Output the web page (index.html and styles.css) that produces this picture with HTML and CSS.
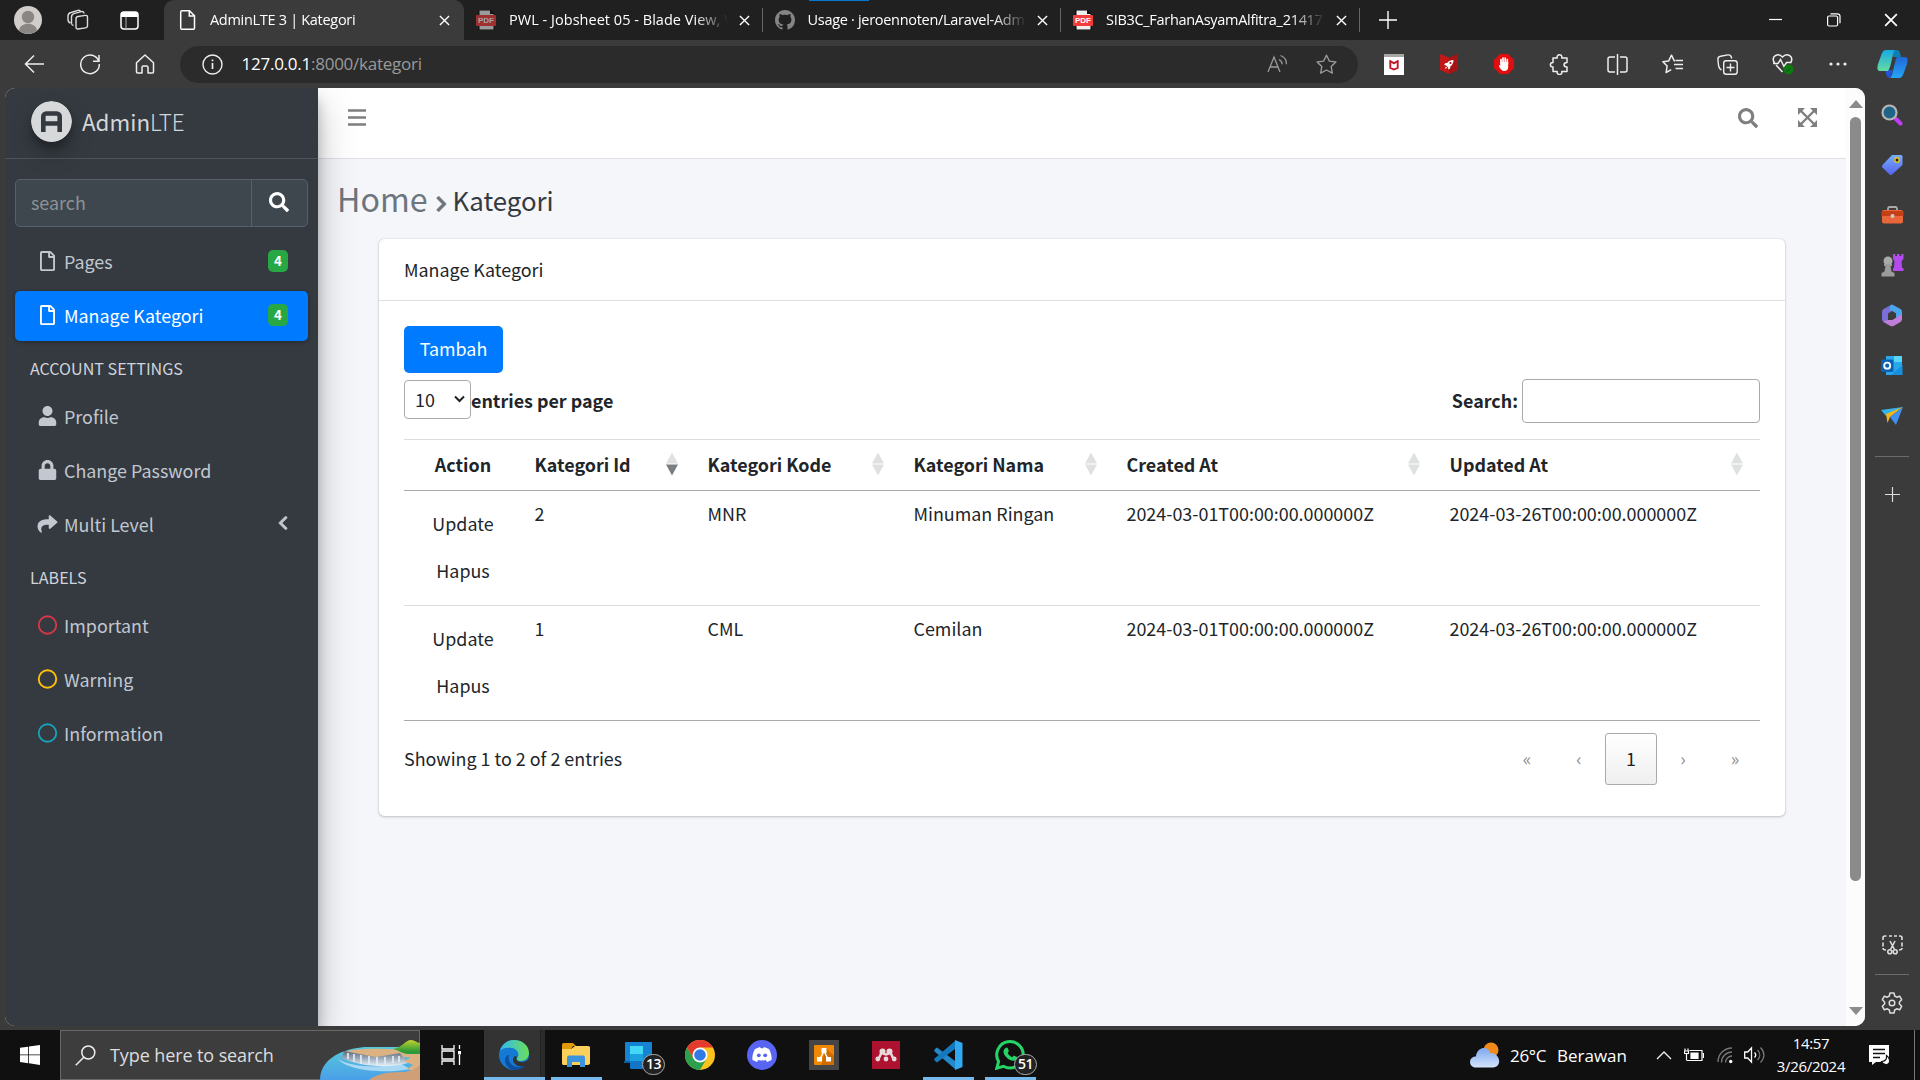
FILE: index.html
```html
<!DOCTYPE html>
<html lang="en">
<head>
<meta charset="utf-8">
<title>AdminLTE 3 | Kategori</title>
<link rel="stylesheet" href="styles.css">
</head>
<body>
<svg class="defs" width="0" height="0">
  <symbol id="x" viewBox="0 0 12 12"><path d="M1 1l10 10M11 1L1 11" fill="none" stroke="currentColor" stroke-width="1.5"/></symbol>
  <symbol id="plus" viewBox="0 0 18 18"><path d="M9 0v18M0 9h18" fill="none" stroke="currentColor" stroke-width="1.4"/></symbol>
  <symbol id="search" viewBox="0 0 512 512"><path fill="currentColor" d="M505 442.700L405.300 343c-4.500-4.500-10.600-7-17-7H372c27.600-35.300 44-79.700 44-128C416 93.100 322.900 0 208 0S0 93.100 0 208s93.100 208 208 208c48.300 0 92.700-16.400 128-44v16.300c0 6.400 2.500 12.500 7 17l99.700 99.700c9.400 9.400 24.600 9.400 33.900 0l28.300-28.300c9.400-9.400 9.400-24.600.1-34zM208 336c-70.700 0-128-57.200-128-128 0-70.700 57.200-128 128-128 70.700 0 128 57.200 128 128 0 70.700-57.200 128-128 128z"/></symbol>
  <symbol id="file" viewBox="0 0 384 512"><path fill="currentColor" d="M369.900 97.900L286 14C277 5 264.800-.1 252.100-.1H48C21.500 0 0 21.500 0 48v416c0 26.500 21.500 48 48 48h288c26.500 0 48-21.500 48-48V131.900c0-12.700-5.100-25-14.100-34zM332.100 128H256V51.900l76.100 76.100zM48 464V48h160v104c0 13.300 10.700 24 24 24h104v288H48z"/></symbol>
  <symbol id="circle" viewBox="0 0 512 512"><circle cx="256" cy="256" r="224" fill="none" stroke="currentColor" stroke-width="48"/></symbol>
  <symbol id="left" viewBox="0 0 320 512"><path fill="currentColor" d="M34.500 239L228.900 44.700c9.400-9.400 24.600-9.400 33.900 0l22.700 22.700c9.400 9.400 9.400 24.500 0 33.900L131.500 256l154 154.700c9.300 9.400 9.300 24.500 0 33.900l-22.700 22.700c-9.400 9.400-24.600 9.400-33.900 0L34.500 273c-9.300-9.400-9.300-24.600 0-34z"/></symbol>
  <symbol id="sort" viewBox="0 0 12 24"><path d="M6 .5l6 11H0z" fill="#dfe1e1"/><path d="M0 12.500h12l-6 11z" fill="currentColor"/></symbol>
</svg>

<header class="tabs">
  <div class="slot w56"><svg width="28" height="28" viewBox="0 0 28 28"><circle cx="14" cy="14" r="14" fill="#d0cdca"/><circle cx="14" cy="11" r="6.200" fill="#898683"/><path d="M5 24.500c1-9 17-9 18 0a14 14 0 0 1-18 0z" fill="#898683"/></svg></div>
  <div class="slot w43"><svg width="22" height="22" viewBox="0 0 22 22" fill="none" stroke="#ddd" stroke-width="1.400"><rect x="9" y="6.500" width="11.500" height="12.500" rx="2" transform="skewY(-8) translate(0 2.500)"/><path d="M6.500 16.500c-2-.5-2-1-2-3V8c0-2 1-3 3-3.600l7-1.800c1.500-.3 2.500.3 2.500 2M3.500 14C1.500 13.500 1 12.500 1 10.500V7c0-2 1-3 3-3.500L11 1.300c1-.3 2 0 2.500 1"/></svg></div>
  <div class="slot w62"><svg width="20" height="19" viewBox="0 0 20 19"><rect x="1" y="1" width="17" height="17" rx="3" fill="none" stroke="#fff" stroke-width="1.500"/><path d="M1 6V3a2 2 0 0 1 2-2h13a2 2 0 0 1 2 2v3z" fill="#fff"/><path d="M6 6v12" stroke="#aaa"/></svg></div>
  <div class="tab active"><svg class="fav" width="20" height="20" viewBox="0 0 20 20" fill="none" stroke="#fff" stroke-width="1.500"><path d="M4 .8h7.500l5 5V18a1.300 1.300 0 0 1-1.300 1.300H4A1.300 1.300 0 0 1 2.700 18V2A1.300 1.300 0 0 1 4 .8zM11.300 1v5h5"/></svg><span class="title">AdminLTE 3 | Kategori</span><svg class="close" width="11" height="11"><use href="#x"/></svg></div>
  <div class="tab"><svg class="fav dim" width="20" height="20" viewBox="0 0 20 20"><path d="M3 0h11l4 4v16H3z" fill="#eee" stroke="#000"/><path d="M14 0v4h4" fill="#111"/><rect y="5" width="20" height="11" rx="1" fill="#f23b3b"/><text x="10" y="13.300" text-anchor="middle" class="pdf-label">PDF</text></svg><span class="title t2">PWL - Jobsheet 05 - Blade View, W</span><svg class="close" width="11" height="11"><use href="#x"/></svg></div>
  <div class="tab"><svg class="fav" width="20" height="20" viewBox="0 0 16 16"><path fill="#858585" d="M8 0C3.580 0 0 3.580 0 8c0 3.540 2.290 6.530 5.470 7.590.4.070.55-.17.55-.38 0-.19-.01-.82-.01-1.490-2.010.37-2.530-.49-2.690-.94-.09-.23-.48-.94-.82-1.130-.28-.15-.68-.52-.01-.53.63-.01 1.080.58 1.230.82.72 1.210 1.870.87 2.330.66.070-.52.28-.87.51-1.070-1.780-.2-3.640-.89-3.640-3.950 0-.87.31-1.590.82-2.150-.08-.2-.36-1.020.08-2.120 0 0 .67-.21 2.200.82.640-.18 1.320-.27 2-.27s1.360.09 2 .27c1.530-1.040 2.200-.82 2.200-.82.440 1.100.16 1.920.08 2.120.51.560.82 1.270.82 2.150 0 3.070-1.870 3.750-3.650 3.950.29.25.54.73.54 1.480 0 1.070-.01 1.930-.01 2.200 0 .21.150.46.55.38A8 8 0 0 0 16 8c0-4.420-3.580-8-8-8z"/></svg><span class="title t3">Usage · jeroennoten/Laravel-Adm</span><svg class="close" width="11" height="11"><use href="#x"/></svg></div>
  <div class="tab"><svg class="fav" width="20" height="20" viewBox="0 0 20 20"><path d="M3 0h11l4 4v16H3z" fill="#eee" stroke="#000"/><path d="M14 0v4h4" fill="#111"/><rect y="5" width="20" height="11" rx="1" fill="#f23b3b"/><text x="10" y="13.300" text-anchor="middle" class="pdf-label">PDF</text></svg><span class="title t4">SIB3C_FarhanAsyamAlfitra_21417</span><svg class="close" width="11" height="11"><use href="#x"/></svg></div>
  <div class="slot w56"><svg width="18" height="18"><use href="#plus"/></svg></div>
  <div class="window-buttons">
    <div class="slot"><svg width="14" height="14" viewBox="0 0 14 14"><path d="M0 6.500h13" stroke="#fff" stroke-width="1.200"/></svg></div>
    <div class="slot"><svg width="14" height="14" viewBox="0 0 14 14" fill="none" stroke="#fff" stroke-width="1.200"><rect x=".6" y="3" width="10" height="10" rx="1.500"/><path d="M3.500.8h7A2.500 2.500 0 0 1 13 3.300v7"/></svg></div>
    <div class="slot"><svg width="14" height="14"><use href="#x"/></svg></div>
  </div>
  <i class="loading"></i>
</header>

<nav class="toolbar">
  <div class="slot w55"><svg width="21" height="20" viewBox="0 0 21 20" fill="none" stroke="#eee" stroke-width="1.500"><path d="M20 10H1.500M10 1.500L1.500 10l8.500 8.500"/></svg></div>
  <div class="slot w55"><svg width="22" height="22" viewBox="0 0 22 22" fill="none" stroke="#eee" stroke-width="1.500"><path d="M19.800 8.300A9.300 9.300 0 1 0 20.300 11M20 2v6.300h-6"/></svg></div>
  <div class="slot w55"><svg width="20" height="20" viewBox="0 0 20 20" fill="none" stroke="#eee" stroke-width="1.500" stroke-linejoin="round"><path d="M1.500 8.800L10 1l8.500 7.800V18a1 1 0 0 1-1 1H13v-5.500a1.500 1.500 0 0 0-1.500-1.500h-3A1.500 1.500 0 0 0 7 13.500V19H2.500a1 1 0 0 1-1-1z"/></svg></div>
  <div class="address">
    <svg width="21" height="21" viewBox="0 0 21 21" fill="none" stroke="#eee" stroke-width="1.400"><circle cx="10.500" cy="10.500" r="9.500"/><path d="M10.500 9v6M10.500 5.500v1.800" stroke-width="1.700"/></svg>
    <span class="url">127.0.0.1<em>:8000/kategori</em></span>
    <svg class="read" width="21" height="20" viewBox="0 0 21 20" fill="none" stroke="#999" stroke-width="1.300"><path d="M1 18L7 3l6 15M3.200 13h7.600M12 5.500c2 1 3 2.500 3.200 4.700M13.500 1.500c4 1.500 6 4.500 6 8.700"/></svg>
    <svg width="21" height="20" viewBox="0 0 21 20" fill="none" stroke="#999" stroke-width="1.400" stroke-linejoin="round"><path d="M10.500 1.200l2.900 5.900 6.500.9-4.700 4.600 1.100 6.500-5.800-3.100-5.800 3.100 1.100-6.500L1.100 8l6.500-.9z"/></svg>
  </div>
  <div class="tools">
    <div class="slot w55"><svg width="20" height="21" viewBox="0 0 20 21"><path fill="#fff" d="M0 0h20v21H0z"/><path fill="#a9a6a2" d="M0 0h20v3H0z"/><path d="M6.300 6.500v7.300L10 15.500l3.700-1.700V6.500M5.500 6.500L10 9.300l4.500-2.800" fill="none" stroke="#c01827" stroke-width="1.900"/></svg></div>
    <div class="slot w55"><svg width="18" height="20" viewBox="0 0 18 20"><path fill="#c01818" d="M0 0l9 3.500L18 0v16l-9 4-9-4z"/><path fill="#8e0f0f" d="M9 3.500L18 0v16l-9 4z" opacity=".5"/><path fill="#fff" d="M13.500 6c-3 0-5 1.200-6.300 3L5 9.300l-.8 1.800 2 .3 1.800 1.900.3 2.200 1.800-1 .3-2.200c2-1.300 3.100-3.300 3.100-6.300zM6 12.500L4.800 15l2.400-1.200z"/><circle cx="10.500" cy="9" r="1.100" fill="#a31414"/></svg></div>
    <div class="slot w55"><svg width="20" height="20" viewBox="0 0 20 20"><path fill="#e40d0d" d="M6 0h8l6 6v8l-6 6H6l-6-6V6z"/><path d="M7 9V5.500M9 9V4M11.200 9V4M13.300 10V5.500" stroke="#fff" stroke-width="1.700" stroke-linecap="round"/><path fill="#fff" d="M6.200 8h8v5c0 2.500-1.500 4-4 4s-3.500-1.500-5-4.200c-.8-1.500.5-1.800 1-1z"/></svg></div>
    <div class="slot w55"><svg width="20" height="21" viewBox="0 0 20 21" fill="none" stroke="#eee" stroke-width="1.500" stroke-linejoin="round"><path d="M4 4h4.200c-1-4.300 5.600-4.300 4.600 0H18v4.500c-4 .2-4 4.300 0 4.500V17.500h-5.200c1 4-5.600 4-4.600 0H4V13c-3.500 0-3.500-4.500 0-4.500z"/></svg></div>
    <i class="sep"></i>
    <div class="slot w55"><svg width="21" height="21" viewBox="0 0 21 21" fill="none" stroke="#eee" stroke-width="1.500"><path d="M10.500 0v21M8 3H3a2 2 0 0 0-2 2v11a2 2 0 0 0 2 2h5M13 3h5a2 2 0 0 1 2 2v11a2 2 0 0 1-2 2h-5"/></svg></div>
    <div class="slot w55"><svg width="21" height="20" viewBox="0 0 21 20" fill="none" stroke="#eee" stroke-width="1.500" stroke-linejoin="round"><path d="M13 7l-.7-.2L9.500 1.200 6.700 6.900.9 7.800l4.200 4.300-1 6.400 5.100-2.800M13.500 6.500H21M12 10.500h9M13.500 14.500H21"/></svg></div>
    <div class="slot w55"><svg width="21" height="21" viewBox="0 0 21 21" fill="none" stroke="#eee" stroke-width="1.400"><rect x="6.700" y="6.700" width="13.500" height="13.500" rx="2.500"/><path d="M13.500 9.500v8M9.500 13.500h8M4.500 16C2.500 15 2 14 1.600 12L.9 5.500C.8 3.500 1.500 2.500 3.500 2.200L11 .9c2-.2 3 .6 3.500 2.600l.2 1"/></svg></div>
    <div class="slot w55"><svg width="22" height="22" viewBox="0 0 22 22" fill="none" stroke="#eee" stroke-width="1.500"><path d="M2.500 10C-1.500 3.500 6-1 10.500 4 15-1 22.500 3.500 18.500 10M4 12l6.500 7M1 10.500h5l2.500-4 3.500 7 2.500-4h5"/><circle cx="16.500" cy="16.500" r="5" fill="#0e7a0e" stroke="none"/><path d="M14 17l1.700 1.500 3-3.500" stroke="#052" stroke-width="1"/></svg></div>
    <div class="slot w55"><svg width="18" height="4" viewBox="0 0 18 4" fill="#eee"><circle cx="2" cy="2" r="1.600"/><circle cx="9" cy="2" r="1.600"/><circle cx="16" cy="2" r="1.600"/></svg></div>
  </div>
  <div class="slot w55"><svg width="31" height="28" viewBox="0 0 31 28"><defs><linearGradient id="cp1" x2="0" y2="1"><stop stop-color="#19a9e5"/><stop offset="1" stop-color="#63dca0"/></linearGradient><linearGradient id="cp2" x2="0" y2="1"><stop stop-color="#2168d8"/><stop offset="1" stop-color="#25a6f5"/></linearGradient></defs><path fill="#0d7fb5" d="M14 0h6c3 0 3 3 4 7h-8z"/><path fill="#2354d8" d="M8 20h8l-3 8c-3 0-4-3-5-8z"/><path fill="url(#cp1)" d="M9 0h9c-3 2-3 16-7 21H3c-3 0-3-3-2-7L5 3c1-2 2-3 4-3z"/><path fill="url(#cp2)" d="M20 7h8c3 0 3 3 2 7l-4 11c-1 2-2 3-4 3h-9c3-1 4-16 7-21z"/></svg></div>
</nav>

<main class="stage">
  <div class="page">
    <aside class="sidebar">
      <div class="brand">
        <svg class="logo" width="41" height="41" viewBox="0 0 41 41"><circle cx="20.500" cy="20.500" r="20.500" fill="#d7d8da"/><path d="M12.300 31V15.500a3 3 0 0 1 3-3h10.400a3 3 0 0 1 3 3V31M12.300 22.500h16.400" fill="none" stroke="#353a40" stroke-width="4.600"/></svg>
        <span>Admin<b>LTE</b></span>
      </div>
      <div class="side-search"><span>search</span><div><svg width="20" height="20"><use href="#search"/></svg></div></div>
      <ul class="menu">
        <li><svg width="15" height="20"><use href="#file"/></svg><span>Pages</span><b class="badge">4</b></li>
        <li class="active"><svg width="15" height="20"><use href="#file"/></svg><span>Manage Kategori</span><b class="badge">4</b></li>
        <li class="head">ACCOUNT SETTINGS</li>
        <li><svg width="18" height="20" viewBox="0 0 448 512"><path fill="currentColor" d="M224 256c70.700 0 128-57.300 128-128S294.700 0 224 0 96 57.300 96 128s57.300 128 128 128zm89.600 32h-16.700c-22.200 10.200-46.900 16-72.900 16s-50.600-5.800-72.900-16h-16.700C60.200 288 0 348.200 0 422.400V464c0 26.500 21.500 48 48 48h352c26.500 0 48-21.500 48-48v-41.600c0-74.200-60.200-134.400-134.400-134.400z"/></svg><span>Profile</span></li>
        <li><svg width="18" height="20" viewBox="0 0 448 512"><path fill="currentColor" d="M400 224h-24v-72C376 68.200 307.800 0 224 0S72 68.200 72 152v72H48c-26.500 0-48 21.500-48 48v192c0 26.500 21.500 48 48 48h352c26.500 0 48-21.500 48-48V272c0-26.500-21.500-48-48-48zm-104 0H152v-72c0-39.700 32.300-72 72-72s72 32.300 72 72v72z"/></svg><span>Change Password</span></li>
        <li><svg width="20" height="20" viewBox="0 0 512 512"><path fill="currentColor" d="M503.700 189.800L327.700 37.900C312.300 24.500 288 35.300 288 56v80.100C127.400 137.900 0 170.100 0 322.300c0 61.400 39.600 122.300 83.300 154.100 13.700 9.900 33.100-2.500 28.100-18.600C66.100 312.800 132.900 274.300 288 272.100V360c0 20.700 24.300 31.500 39.700 18.200l176-152c11.100-9.600 11.100-26.800 0-36.400z"/></svg><span>Multi Level</span><svg class="caret" viewBox="2 32 316 448"><path fill="currentColor" stroke="currentColor" stroke-width="18" d="M34.500 239L228.900 44.700c9.400-9.400 24.600-9.400 33.900 0l22.700 22.700c9.400 9.400 9.400 24.500 0 33.900L131.500 256l154 154.700c9.300 9.400 9.300 24.500 0 33.900l-22.700 22.700c-9.400 9.400-24.600 9.400-33.900 0L34.500 273c-9.300-9.400-9.300-24.600 0-34z"/></svg></li>
        <li class="head">LABELS</li>
        <li><svg class="red" width="20" height="20"><use href="#circle"/></svg><span>Important</span></li>
        <li><svg class="yellow" width="20" height="20"><use href="#circle"/></svg><span>Warning</span></li>
        <li><svg class="cyan" width="20" height="20"><use href="#circle"/></svg><span>Information</span></li>
      </ul>
    </aside>
    <section class="content">
      <div class="navbar">
        <svg width="18" height="18" viewBox="0 0 18 18"><path d="M0 2.500h18M0 9.500h18M0 16.500h18" stroke="currentColor" stroke-width="2.600"/></svg>
        <svg class="nav-search" width="20" height="20"><use href="#search"/></svg>
        <svg width="19" height="19" viewBox="0 0 19 19"><path d="M3 3l13 13M16 3L3 16" stroke="currentColor" stroke-width="2.400"/><path fill="currentColor" d="M0 0h7L0 7zM19 0v7l-7-7zM0 19v-7l7 7zM19 19h-7l7-7z"/></svg>
      </div>
      <h1 class="crumbs"><span>Home</span><svg width="11" height="18" viewBox="0 0 320 512"><path fill="currentColor" stroke="currentColor" stroke-width="24" d="M285.500 273L91.100 467.300c-9.400 9.400-24.600 9.400-33.900 0l-22.700-22.700c-9.400-9.400-9.400-24.500 0-33.900L188.500 256l-154-154.700c-9.300-9.400-9.300-24.500 0-33.900l22.700-22.700c9.400-9.400 24.600-9.400 33.900 0L285.500 239c9.300 9.400 9.300 24.600 0 34z"/></svg><small>Kategori</small></h1>
      <div class="card">
        <div class="card-head">Manage Kategori</div>
        <div class="card-body">
          <div class="btn">Tambah</div>
          <div class="controls">
            <div class="select">10<svg width="11" height="8" viewBox="0 0 11 8"><path d="M1 1.500l4.500 4.500L10 1.500" fill="none" stroke="#222" stroke-width="2"/></svg></div>
            <b>entries per page</b>
            <b class="search-label">Search:</b><div class="field"></div>
          </div>
          <table>
            <colgroup><col class="c1"><col class="c2"><col class="c3"><col class="c4"><col class="c5"><col class="c6"></colgroup>
            <thead><tr>
              <th class="act">Action</th>
              <th><div>Kategori Id<svg class="desc" width="12" height="24"><use href="#sort"/></svg></div></th>
              <th><div>Kategori Kode<svg width="12" height="24"><use href="#sort"/></svg></div></th>
              <th><div>Kategori Nama<svg width="12" height="24"><use href="#sort"/></svg></div></th>
              <th><div>Created At<svg width="12" height="24"><use href="#sort"/></svg></div></th>
              <th><div>Updated At<svg width="12" height="24"><use href="#sort"/></svg></div></th>
            </tr></thead>
            <tbody>
              <tr><td class="act"><p>Update</p><p>Hapus</p></td><td>2</td><td>MNR</td><td>Minuman Ringan</td><td>2024-03-01T00:00:00.000000Z</td><td>2024-03-26T00:00:00.000000Z</td></tr>
              <tr><td class="act"><p>Update</p><p>Hapus</p></td><td>1</td><td>CML</td><td>Cemilan</td><td>2024-03-01T00:00:00.000000Z</td><td>2024-03-26T00:00:00.000000Z</td></tr>
            </tbody>
          </table>
          <div class="foot"><span class="info">Showing 1 to 2 of 2 entries</span><span class="pg">«</span><span class="pg">‹</span><span class="pg current">1</span><span class="pg">›</span><span class="pg">»</span></div>
        </div>
      </div>
    </section>
    <div class="scroll"><svg width="14" height="8" viewBox="0 0 14 8"><path d="M7 0l7 8H0z" fill="#8b8b8b"/></svg><i></i><svg width="14" height="8" viewBox="0 0 14 8"><path d="M0 0h14L7 8z" fill="#8b8b8b"/></svg></div>
  </div>
  <aside class="rail">
    <div class="slot"><svg width="22" height="22" viewBox="0 0 22 22"><path d="M15 15l4.500 4.500" stroke="#c23cf5" stroke-width="4" stroke-linecap="round"/><circle cx="8.500" cy="8.500" r="7" fill="#1d6488" stroke="#b5b5b5" stroke-width="2.200"/></svg></div>
    <div class="slot"><svg width="22" height="22" viewBox="0 0 22 22"><defs><linearGradient id="tg" x2="0" y2="1"><stop stop-color="#76aefc"/><stop offset="1" stop-color="#5463ee"/></linearGradient></defs><path fill="url(#tg)" d="M11 1h9a1.500 1.500 0 0 1 1.500 1.500V11L11 20.500a2 2 0 0 1-2.500 0L1.500 13.500a2 2 0 0 1 0-2.500z"/><circle cx="16" cy="6" r="2.200" fill="#222" stroke="#ebc31a" stroke-width="1.400"/></svg></div>
    <div class="slot"><svg width="23" height="20" viewBox="0 0 23 20"><path d="M7 5V3.500A1.800 1.800 0 0 1 9 2h5a1.800 1.800 0 0 1 2 1.500V5" fill="none" stroke="#aaa" stroke-width="1.800"/><rect x="1" y="5" width="21" height="13.500" rx="2" fill="#e8663a"/><path d="M.5 6h22v5H.5z" fill="#c43f16"/><circle cx="11.500" cy="11" r="2" fill="#ccc"/></svg></div>
    <div class="slot"><svg width="24" height="24" viewBox="0 0 24 24"><path fill="#b44bf0" d="M13 1h2.200v2H17V1h2.500v2h1.800V1H23.500v5l-2 2 .5 7h1.500v3H13v-3h1l.5-7-1.500-2z"/><circle cx="8" cy="8" r="4.500" fill="#aaa"/><path fill="#9b9b9b" d="M4 11h8v2h-1.500l1 5.500 3 1.500v3.500h-13V20l3-1.500 1-5.500H4z"/></svg></div>
    <div class="slot"><svg width="22" height="23" viewBox="0 0 22 23"><path fill="#7a6fd8" d="M11 .5L2.500 5Q1 6 1 8v7q0 2 1.500 3L7 20.500V10L12 7V1z"/><path fill="#4aa5ea" d="M9 1.500q2-1.500 4 0L19.500 5Q21 6 21 8v8l-6-3V9.500L9 6z"/><path fill="#c07ed8" d="M2 17.500l5-1.500 4 0 10-6v5q0 2-1.500 3L13 21.700q-2 1.200-4 0z"/><path fill="#3b3b3b" d="M11 7l4 2.500v4L11 16l-4-2.500v-4z"/></svg></div>
    <div class="slot"><svg width="22" height="21" viewBox="0 0 22 21"><path fill="#28a8ea" d="M5 1h16v19H5z"/><path fill="#56d6f8" d="M13 1h8v6h-8z"/><path fill="#1490df" d="M21.500 10v10H10z"/><rect x="0" y="4.500" width="12.500" height="12.500" rx="1" fill="#0a62b5"/><circle cx="6.200" cy="10.700" r="3" fill="none" stroke="#fff" stroke-width="1.800"/></svg></div>
    <div class="slot"><svg width="22" height="18" viewBox="0 0 22 18"><path fill="#35b4ea" d="M0 3L22 0 5 9z"/><path fill="#f2b617" d="M5 7L22 0 9 10l-2.500 6z"/><path fill="#3f90f0" d="M9 10L22 0l-7 18z"/></svg></div>
    <i></i>
    <div class="slot add"><svg width="15" height="15"><use href="#plus"/></svg></div>
    <div class="slot snip"><svg width="21" height="20" viewBox="0 0 21 20" fill="none" stroke="#ddd" stroke-width="1.600"><path d="M1 5V3a2 2 0 0 1 2-2h1.500M7 1h3M12 1h3M17 1h1a2 2 0 0 1 2 2v2M1 7.500v4M20 7.500v4M1 13c0 1.500 1 2 3 2M20 13c0 1.500-1 2-3 2M8 6l4.500 8.500M13 6l-4.500 8.500"/><circle cx="7.800" cy="16.800" r="2"/><circle cx="13.200" cy="16.800" r="2"/></svg></div>
    <i class="second"></i>
    <div class="slot gear"><svg width="22" height="22" viewBox="0 0 22 22" fill="none" stroke="#ddd" stroke-width="1.500" stroke-linejoin="round"><path d="M9 1h4l.7 3 2 1.200 3-1 2 3.600L18.400 10v2l2.300 2.200-2 3.600-3-1-2 1.200L13 21H9l-.7-3-2-1.200-3 1-2-3.600L3.600 12v-2L1.300 7.800l2-3.600 3 1 2-1.200z"/><circle cx="11" cy="11" r="2.800"/></svg></div>
  </aside>
</main>

<footer class="taskbar">
  <div class="slot start"><svg width="20" height="20" viewBox="0 0 20 20" fill="#fff"><path d="M0 2.800L8.200 1.700V9.500H0zM9 1.600L20 0v9.500H9zM0 10.300h8.200v7.900L0 17.100zM9 10.300h11V20L9 18.300z"/></svg></div>
  <div class="task-search">
    <svg width="21" height="21" viewBox="0 0 21 21" fill="none" stroke="#eee" stroke-width="1.500"><circle cx="13.300" cy="7.500" r="6.500"/><path d="M8.800 12.200L.8 20.200"/></svg>
    <span>Type here to search</span>
    <svg class="art" width="100" height="40" viewBox="0 0 100 40"><defs><linearGradient id="sea" x2="0" y2="1"><stop stop-color="#58c9d8"/><stop offset="1" stop-color="#4a9fe8"/></linearGradient><linearGradient id="hill" x2="0" y2="1"><stop stop-color="#c3d32b"/><stop offset=".8" stop-color="#2f9a3a"/></linearGradient><linearGradient id="fall" x2="0" y2="1"><stop stop-color="#5b6678"/><stop offset="1" stop-color="#e6f3fc"/></linearGradient></defs><path fill="url(#sea)" d="M0 40C0 22 16 10 44 7h56v33z"/><path fill="#dcb283" d="M24 12c14-4 40-4 76-1v9L90 17 58 19z"/><path fill="#a9d8f5" d="M18 19c12 8 44 10 62 4l10 6c-24 5-62 2-72-10z"/><path fill="url(#fall)" d="M24 11l32 6 24-4 8 10c-22 6-50 3-66-5z"/><path d="M28 13v6m6-5v8m7-7v9m8-8v9m8-8v8m8-8v8m8-9v7m6-7v6" stroke="#dceaf6" stroke-width="1.800"/><path fill="#dcb283" d="M82 13l18-1v26h-8l3-6-8-3 6-4-9-4 6-3z"/><path fill="#cf9f77" d="M49 40c10-8 25-8 36-8l8-2 7-5v15z"/><path fill="url(#hill)" d="M73 9c8-1 13-9 18-9 4 0 6 3 9 3v11H87c-6-1-9-4-14-5z"/></svg>
  </div>
  <div class="slot w64"><svg width="20" height="20" viewBox="0 0 20 20" fill="none" stroke="#fff" stroke-width="1.300"><path d="M1 0v4h12V0M1 20v-4h12v4M1 6h12v8H1zM18.500 0v4M18.500 10v10"/><path d="M18.500 6v3.500" stroke-width="3"/></svg></div>
  <div class="app on edge"><svg width="30" height="30" viewBox="0 0 30 30"><defs><linearGradient id="eg"><stop stop-color="#35b8f1"/><stop offset="1" stop-color="#69df58"/></linearGradient></defs><circle cx="15" cy="15" r="15" fill="#147ad4"/><path fill="url(#eg)" d="M1 11C3 4 8 0 15 0c9 0 15 6 15 13 0 5-4 8-8 8-3 0-5-1-4-3 3-3 1-9-5-10C8 7 3 8 1 11z"/><path fill="#0d4f9e" d="M10 15c-2 6 3 12 9 12 3 0 5-1 8-2-3 4-8 5-12 5-6-1-9-6-9-10 0-3 2-5 4-5z"/><path fill="#333" d="M17.700 17.500c-1 2.500 1 4.500 5 4.500 3 0 6-1.500 7.300-4l.5 6-3 1.300c-6 3-13 0-13.500-5.300 0-4 4-5.500 3.700-2.500z"/></svg></div>
  <div class="app on"><svg width="28" height="24" viewBox="0 0 28 24"><path fill="#e19b0a" d="M0 2C0 .5 1 0 2 0h9l3 3h-3L9 6H0z"/><path fill="#fcd05a" d="M0 6h9l4-3h13.500L28 4v17l-2 1H1l-1-1z"/><path fill="#3a94dd" d="M5 24V14.500a2 2 0 0 1 2-2h14a2 2 0 0 1 2 2V24h-5v-5h-8v5z"/></svg></div>
  <div class="app"><svg width="28" height="27" viewBox="0 0 28 27"><rect x="1" y="0" width="27" height="19" rx="1" fill="#1583d2"/><path fill="#0b5d9e" d="M0 19h10v2H0z"/><rect x="6" y="4" width="13" height="23" rx="1" fill="#1175c8"/><path fill="#43d8f5" d="M6 4h13v8H6z"/><path fill="#1ca1e0" d="M6 12h13v7H6z"/></svg><b class="count">13</b></div>
  <div class="app"><svg width="30" height="30" viewBox="0 0 30 30"><circle cx="15" cy="15" r="15" fill="#fcc31e"/><path fill="#e33b2e" d="M2 7.500a15 15 0 0 1 26 0H15v7.500L8.500 18.800z"/><path fill="#2da04e" d="M2 7.500a15 15 0 0 0 13 22.500l6.500-11.200L15 22l-6.500-3.200z"/><circle cx="15" cy="15" r="7.500" fill="#fff"/><circle cx="15" cy="15" r="5.800" fill="#3279e8"/></svg></div>
  <div class="app"><svg width="30" height="30" viewBox="0 0 30 30"><circle cx="15" cy="15" r="15" fill="#5865f2"/><path fill="#fff" d="M8 9l5-2 .7 1.300h2.600L17 7l5 2c2 4 3 7 2.500 11L20 22l-1.300-2c-2.500.7-5 .7-7.400 0L10 22l-4.500-2C5 16 6 13 8 9z"/><circle cx="11.800" cy="15.300" r="1.900" fill="#5865f2"/><circle cx="18.200" cy="15.300" r="1.900" fill="#5865f2"/></svg></div>
  <div class="app"><svg width="30" height="30" viewBox="0 0 30 30"><path fill="#454545" d="M0 0h30v30H0z"/><rect x="5" y="5" width="20" height="20" rx="1" fill="#f08705"/><path fill="#cf6c00" d="M17 8l8 8v9H12z"/><path d="M15 11l-4.500 9M15 11l4.500 9" stroke="#fff" stroke-width="1.500"/><path fill="#fff" d="M12.500 8h5v5h-5zM8 17h5v4.500H8zM17 17h5v4.500h-5z"/></svg></div>
  <div class="app"><svg width="28" height="28" viewBox="0 0 28 28"><rect width="28" height="28" rx="1" fill="#ad1230"/><path d="M6 18c1.500-1 2.500-4 4-8M22 18c-1.500-1-2.500-4-4-8M10 11q4 5 8 0" fill="none" stroke="#e6dada" stroke-width="2.600"/><g fill="#e6dada"><circle cx="10.500" cy="10.500" r="3"/><circle cx="17.500" cy="10.500" r="3"/><circle cx="5.800" cy="18" r="2.400"/><circle cx="14" cy="18" r="2.400"/><circle cx="22.200" cy="18" r="2.400"/></g></svg></div>
  <div class="app on"><svg width="30" height="30" viewBox="0 0 30 30"><path fill="#2489ca" d="M2 9l2-1.500L22 21v8L1 11z"/><path fill="#1478bd" d="M2 21l2 1.500L22 9V1L1 19z"/><path fill="#32a8f0" d="M22 0l7.500 3v24L22 30z"/></svg></div>
  <div class="app on"><svg width="30" height="30" viewBox="0 0 30 30"><path d="M1.800 28.200l1.800-6.700A13.200 13.200 0 1 1 8.500 26.300z" fill="none" stroke="#25d366" stroke-width="3"/><path fill="#25d366" d="M10.500 8c1-1 2-.5 2.400.5l1 2.500-1.200 2c1 2 2.600 3.400 4.500 4.200l1.600-1.800 3.200 1.600c.5 2-1.500 3.800-3.500 3.800C13 20.500 8.500 15 8.500 11.500c0-1.500 1-2.500 2-3.500z"/></svg><b class="count">51</b></div>
  <div class="tray">
    <svg width="30" height="26" viewBox="0 0 30 26"><defs><linearGradient id="cl" x2="0" y2="1"><stop stop-color="#7fa8ee"/><stop offset="1" stop-color="#d4e4fb"/></linearGradient></defs><circle cx="21" cy="8" r="7.500" fill="#f18a1b"/><path fill="url(#cl)" d="M6 25.500c-8 0-8-11 0-11C7 4 19 4 20 11c10-1 13 14 3 14.500z"/></svg>
    <span class="temp">26°C</span><span class="cond">Berawan</span>
    <svg class="up" width="16" height="9" viewBox="0 0 16 9"><path d="M1 8l7-7 7 7" fill="none" stroke="#eee" stroke-width="1.400"/></svg>
    <svg class="bat" width="20" height="14" viewBox="0 0 20 14" fill="none" stroke="#fff" stroke-width="1.200"><path d="M5.500 2.500h12.500v10H3M19.500 5v5M1 .5v2M4 .5v2M.5 3h4v2.500h-4zM2.500 5.500v7"/><path d="M7 5h7v5.500H7z" fill="#fff"/></svg>
    <svg class="wifi" width="16" height="17" viewBox="0 0 16 17" fill="none" stroke="#777" stroke-width="1.400"><path d="M1 15A14 14 0 0 1 15 1M4.500 15.500A10.500 10.500 0 0 1 15 5M8.500 15.500A6.500 6.500 0 0 1 15 9"/><circle cx="13.700" cy="14.500" r="1.700" fill="#fff" stroke="none"/></svg>
    <svg class="vol" width="21" height="18" viewBox="0 0 21 18" fill="none" stroke="#fff" stroke-width="1.300"><path d="M.7 6h3L7.500 2v14L3.700 12h-3zM10.500 6.500c1.500 1.500 1.500 3.500 0 5"/><path stroke="#777" d="M13.500 4c3 3 3 7 0 10M16.500 1.500c4.500 4.500 4.500 10.500 0 15"/></svg>
    <div class="clock"><span>14:57</span><span>3/26/2024</span></div>
    <svg class="note" width="21" height="21" viewBox="0 0 21 21"><path fill="#fff" d="M0 0h20v17H7l-4 3v-3H0z"/><path d="M4 4.500h12M4 8.500h12M4 12.500h7" stroke="#111" stroke-width="1.500"/><path d="M17.500 10.500c.5 4-1.500 6-5 6 3 5.500 9 3 8-1.500-.3-2-1.500-3.500-3-4.500z" fill="#fff" stroke="#111" stroke-width="1.200"/></svg>
    <i></i>
  </div>
</footer>
</body>
</html>
```
FILE: styles.css
```css
* { box-sizing: border-box; }
body { margin: 0; width: 1920px; height: 1080px; overflow: hidden; display: flex; flex-direction: column; background: #3b3b3b; font-family: "Open Sans", "Noto Sans", sans-serif; color: #fff; }
svg { display: block; flex: none; }
p, h1, ul { margin: 0; padding: 0; }
.defs { position: absolute; }
.slot { display: flex; align-items: center; justify-content: center; flex: none; }
.w43 { width: 43px; }
.w55 { width: 55px; }
.w56 { width: 56px; }
.w62 { width: 65px; padding-right: 3px; }
.w64 { width: 64px; padding-right: 3px; }

/* Browser tabs */
.tabs { position: relative; height: 40px; flex: none; display: flex; background: #202020; }
.tab { display: flex; align-items: center; width: 298.500px; height: 40px; padding: 0 13px 0 12px; font-size: 14.500px; }
.tab + .tab { background: linear-gradient(#666, #666) right 8px / 1px 24px no-repeat; }
.tab.active { width: 300px; padding-left: 14px; padding-right: 14px; background: #3b3b3b; border-radius: 10px 10px 0 0; }
.fav { margin-right: 13px; }
.active .fav { margin-right: 12px; }
.dim { opacity: .6; }
.title { width: 219px; height: 40px; line-height: 39px; white-space: nowrap; letter-spacing: -.3px; mask-image: linear-gradient(90deg, #000 185px, transparent 219px); }
.t2 { letter-spacing: .03px; }
.close { margin-left: auto; }
.loading { position: absolute; left: 809px; top: 0; width: 60px; height: 1px; background: #0078d4; }
.window-buttons { margin-left: auto; display: flex; }
.window-buttons .slot { width: 57.500px; }
.pdf-label { font: bold 8px "Liberation Sans", sans-serif; fill: #fff; }

/* Browser toolbar */
.toolbar { height: 48px; flex: none; display: flex; align-items: center; padding-left: 7px; }
.address { display: flex; align-items: center; width: 1180px; height: 37px; margin-left: 8px; padding: 0 21px 0 22px; border-radius: 19px; background: #2b2b2b; }
.url { margin: 0 0 2px 18.500px; font-size: 17px; letter-spacing: -.25px; }
.url em { font-style: normal; color: #9a9a9a; }
.read { margin: 0 28px 0 auto; }
.tools { display: flex; align-items: center; width: 499px; margin-left: 8px; }
.tools .sep { width: 1px; height: 24px; margin: 0 1px 0 3px; background: #6b6b6b; }

/* Browser content area */
.stage { display: flex; height: 942px; flex: none; padding-left: 5px; }
.page { width: 1860px; height: 938px; display: flex; overflow: hidden; border-radius: 10px; background: #f4f6f9; color: #212529; font: 17.900px/30px "Noto Sans CJK JP", "Noto Sans", sans-serif; }
.sidebar { position: relative; width: 313px; flex: none; background: #343a40; box-shadow: 0 17px 35px rgba(0,0,0,.25), 0 12px 12px rgba(0,0,0,.22); color: #c2c7d0; }
.brand { display: flex; align-items: center; height: 71px; padding: 0 0 4px 26px; border-bottom: 1px solid #4b545c; font-size: 22.400px; color: #d5d6d8; }
.brand b { font-weight: 300; }
.logo { margin-right: 10px; border-radius: 50%; box-shadow: 0 12px 24px rgba(0,0,0,.19), 0 7px 7px rgba(0,0,0,.23); }
.side-search { display: flex; height: 48px; margin: 20px 10px 10px; border: 1px solid #56606a; border-radius: 5px; background: #3f474e; color: #8d9296; line-height: 44px; }
.side-search span { width: 236px; padding-left: 15px; border-right: 1px solid #56606a; }
.side-search div { flex: 1; display: flex; align-items: center; justify-content: center; padding: 0 2px 2px 0; color: #fff; }
.menu { list-style: none; padding: 0 10px; }
.menu li { display: flex; align-items: center; height: 50px; margin-bottom: 4px; padding: 0 20px 2px; border-radius: 5px; }
.menu li > svg:first-child { width: 25px; margin-right: 4px; }
.menu li.active { background: #007bff; color: #fff; box-shadow: 0 1px 4px rgba(0,0,0,.3); }
.menu li.head { height: 47px; padding: 0 15px 2px; font-size: 16.100px; color: #d0d4db; margin-bottom: 0; }
.badge { margin-left: auto; width: 20px; height: 22px; border-radius: 5px; background: #28a745; color: #fff; font-size: 13.400px; line-height: 21px; text-align: center; }
.caret { margin: 0 0 2px auto; width: 10px; height: 14px; }
.red { color: #dc3545; }
.yellow { color: #ffc107; }
.cyan { color: #17a2b8; }

.content { flex: 1; }
.navbar { display: flex; height: 71px; padding: 20px 29px 0 29.500px; background: #fff; border-bottom: 1px solid #dee2e6; color: #7f7f7f; }
.nav-search { margin: 0 40px 0 auto; }
.crumbs { display: flex; height: 80px; padding: 11px 0 0 19px; font-weight: 400; font-size: 32.200px; line-height: 56px; color: #6c757d; }
.crumbs svg { margin: 25px 6px 0 8px; }
.crumbs small { font-size: 25.800px; color: #343a40; line-height: 60px; }
.card { width: 1406px; height: 577px; margin-left: 61px; border-radius: 5px; background: #fff; box-shadow: 0 0 1px rgba(0,0,0,.25), 0 1px 3px rgba(0,0,0,.2); }
.card-head { height: 62px; padding: 15px 25px; border-bottom: 1px solid #dfdfdf; }
.card-body { padding: 25px; }
.btn { width: 99px; height: 47px; border-radius: 5px; background: #007bff; color: #fff; text-align: center; line-height: 44px; }
.controls { display: flex; align-items: center; height: 44px; margin: 6px 0 16px; }
.controls b { padding-bottom: 2px; }
.select { display: flex; align-items: center; justify-content: space-between; width: 67px; height: 39px; margin-bottom: 3px; padding: 0 5px 2px 10px; border: 1px solid #aaa; border-radius: 4px; }
.search-label { margin: 0 4px 0 auto; }
.field { width: 238px; height: 44px; border: 1px solid #aaa; border-radius: 4px; }
table { width: 1356px; table-layout: fixed; border-collapse: separate; border-spacing: 0; }
.c1 { width: 118px; } .c2 { width: 173px; } .c3 { width: 206px; } .c4 { width: 213px; } .c5 { width: 323px; } .c6 { width: 323px; }
th { height: 52px; padding: 0 17px 2px 12.500px; text-align: left; border-top: 1px solid #dcdcdc; border-bottom: 1px solid #aaa; }
th div { display: flex; align-items: center; justify-content: space-between; }
th svg { color: #dfe1e1; }
th .desc { color: #7b7e80; }
td { height: 115px; padding: 7px 12.500px; vertical-align: top; }
tbody tr:first-child td { border-bottom: 1px solid #dcdcdc; }
tbody tr:last-child td { border-bottom: 1px solid #aaa; }
.act { padding-left: 0; padding-right: 0; text-align: center; }
td.act p { height: 47px; padding-top: 10px; }
.foot { display: flex; align-items: center; height: 52px; margin: 12px -1px 0 0; }
.info { margin: 0 auto 2px 0; }
.pg { width: 52px; height: 52px; line-height: 50px; text-align: center; color: #888; }
.current { border: 1px solid #aaa; border-radius: 3px; background: linear-gradient(#fff, #efefef); color: #222; line-height: 48px; }
.scroll { width: 19px; display: flex; flex-direction: column; align-items: center; padding: 12px 0 11px; background: #fcfcfc; }
.scroll i { width: 11px; height: 764px; margin: 9px 0 auto; border-radius: 6px; background: #8b8b8b; }

/* Browser side rail */
.rail { display: flex; flex-direction: column; align-items: center; width: 54px; padding-top: 1.500px; }
.rail .slot { height: 50.200px; width: 54px; }
.rail i { width: 34px; height: 1px; background: #6b6b6b; margin: 15px 0 13px; flex: none; }
.rail .add { color: #ddd; }
.rail .snip { margin: auto 0 0; height: 54px; }
.rail i.second { margin: 2px 0 3px; }
.rail .gear { height: 49px; margin-bottom: 3px; }

/* Taskbar */
.taskbar { display: flex; height: 50px; flex: none; background: #101010; }
.start { width: 60px; }
.task-search { display: flex; align-items: center; width: 360px; height: 50px; padding-left: 14px; border: 1px solid #686868; background: #3d3d3d; color: #ddd; font-size: 18px; }
.task-search span { margin-left: 14px; white-space: nowrap; letter-spacing: -.1px; }
.art { margin: 9px -1px 0 auto; }
.app { position: relative; display: flex; align-items: center; justify-content: center; width: 62px; height: 50px; }
.app.on { background: linear-gradient(#76b9ed, #76b9ed) center bottom / 51px 3px no-repeat; }
.app.edge { background: linear-gradient(#76b9ed, #76b9ed) center bottom / 61px 3px no-repeat, linear-gradient(90deg, #333 56px, #222 56px, #222 57px, #2b2b2b 57px); width: 61px; padding-right: 2px; }
.count { position: absolute; left: 35px; top: 24px; width: 23px; height: 21px; border: 1px solid #aaa; border-radius: 11px; background: #222; font-size: 14px; line-height: 18px; text-align: center; font-weight: 600; letter-spacing: -.5px; }
.tray { display: flex; align-items: center; margin-left: auto; font-size: 17px; }
.temp { width: 38px; margin-left: 10px; letter-spacing: -.3px; }
.cond { width: 68px; margin-left: 9px; }
.up { margin-left: 31px; }
.bat { margin-left: 12px; }
.wifi { margin-left: 13px; }
.vol { margin-left: 11px; }
.clock { display: flex; flex-direction: column; align-items: center; width: 92px; padding-bottom: 1px; font-size: 15px; line-height: 23px; letter-spacing: -.3px; }
.note { margin-left: 12px; }
.tray i { width: 1px; height: 50px; margin: 0 5px 0 24px; background: #777; }
```
